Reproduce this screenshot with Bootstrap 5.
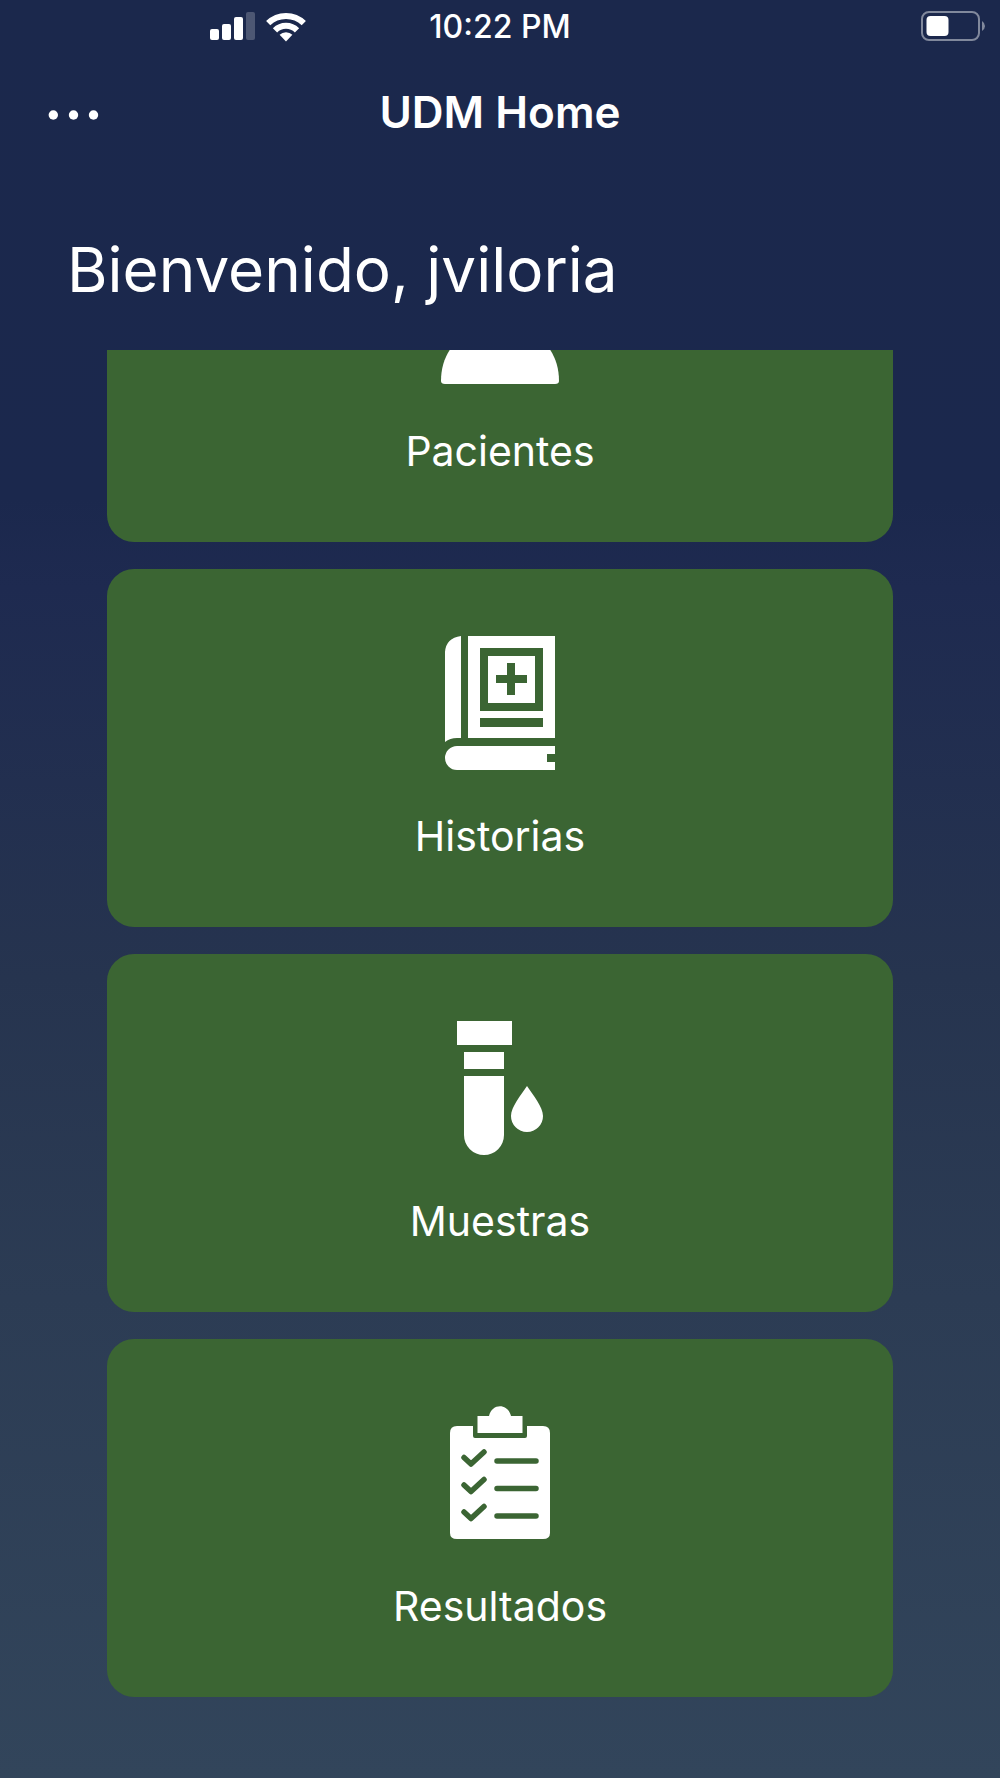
<!DOCTYPE html>
<html lang="es">
<head>
<meta charset="utf-8">
<meta name="viewport" content="width=device-width, initial-scale=1">
<title>UDM Home</title>
<link href="https://cdn.jsdelivr.net/npm/bootstrap@5.3.0/dist/css/bootstrap.min.css" rel="stylesheet">
<style>
  body {
    font-family: Inter, "Liberation Sans", sans-serif;
    color: #fff;
    background: linear-gradient(#1b284c 0%, #1b284d 28%, #1e2a50 33%, #26344f 55%, #2c3c54 73%, #32455b 100%) no-repeat;
  }
  .screen { height: 100vh; }
  .status-bar { height: 54px; padding: 0 15px; }
  .status-side { flex: 1 1 0; gap: 10px; }
  .signal { margin-left: 195px; }
  .clock { font-size: 32px; line-height: 36px; font-weight: 500; }
  .title-bar { height: 118px; padding: 0 48px 2px; }
  .title-side { flex: 1 1 0; }
  .page-title { font-size: 44px; line-height: 52px; font-weight: 600; }
  .welcome { font-size: 62px; line-height: 80px; font-weight: 400; padding: 58px 67px 40px; }
  .tile-view { margin: 0 107px; }
  .tile-list { gap: 27px; margin-top: -166px; }
  .tile {
    background: #3b6533; color: #fff; text-decoration: none;
    border-radius: 27px; padding: 67px 24px 64px; gap: 39px;
  }
  .tile:hover { color: #fff; }
  .tile-label { font-size: 41px; line-height: 54px; }
</style>
<script src="https://cdn.jsdelivr.net/npm/bootstrap@5.3.0/dist/js/bootstrap.bundle.min.js" defer></script>
</head>
<body>
<div class="screen d-flex flex-column overflow-hidden">
  <div class="status-bar d-flex align-items-center flex-shrink-0">
    <div class="status-side d-flex align-items-center">
      <svg class="signal" width="46" height="30" viewBox="0 0 46 30" fill="#fff" aria-label="Señal">
        <rect x="0" y="17" width="9" height="11" rx="2"/><rect x="12" y="12" width="9" height="16" rx="2"/>
        <rect x="24" y="5" width="9" height="23" rx="2"/><rect x="36" y="0" width="9" height="28" rx="2" opacity=".22"/>
      </svg>
      <svg width="40" height="30" viewBox="0 0 40 30" fill="none" stroke="#fff" stroke-width="6" aria-label="Wi-Fi">
        <path d="M2.200 11.200A25.500 25.500 0 0 1 37.800 11.200"/>
        <path d="M9 18.300A15.400 15.400 0 0 1 31 18.300"/>
        <path d="M20 29.500L13.600 22.800A9 9 0 0 1 26.400 22.800Z" fill="#fff" stroke="none"/>
      </svg>
    </div>
    <div class="clock">10:22 PM</div>
    <div class="status-side d-flex justify-content-end">
      <svg width="64" height="32" viewBox="0 0 64 32" aria-label="Batería">
        <rect x="1" y="1" width="57" height="28" rx="7" fill="none" stroke="#fff" stroke-opacity=".45" stroke-width="2"/>
        <rect x="5.500" y="5" width="22" height="20" rx="4" fill="#fff"/>
        <path d="M61 10q3 2 3 5t-3 5z" fill="#fff" opacity=".45"/>
      </svg>
    </div>
  </div>
  <header class="title-bar d-flex align-items-center flex-shrink-0">
    <div class="title-side d-flex">
      <button type="button" class="btn p-0 border-0 d-flex" aria-label="Menú">
        <svg width="52" height="16" viewBox="0 0 52 16" fill="#fff"><circle cx="5.300" cy="11" r="4.700"/><circle cx="25.500" cy="11" r="4.700"/><circle cx="45.500" cy="11" r="4.700"/></svg>
      </button>
    </div>
    <h1 class="page-title m-0">UDM Home</h1>
    <div class="title-side"></div>
  </header>
  <h2 class="welcome m-0 flex-shrink-0">Bienvenido, jviloria</h2>
  <main class="tile-view overflow-hidden flex-shrink-0">
    <nav class="tile-list d-flex flex-column" aria-label="Módulos">
      <a class="tile d-flex flex-column align-items-center" href="#pacientes">
        <svg width="134" height="134" viewBox="0 0 134 134" fill="#fff"><circle cx="67" cy="34" r="34"/><path d="M67 74C98 74 126 94 126 130Q126 133 122 133H12Q8 133 8 130C8 94 36 74 67 74Z"/></svg>
        <span class="tile-label">Pacientes</span>
      </a>
      <a class="tile d-flex flex-column align-items-center" href="#historias">
        <svg width="134" height="134" viewBox="0 0 134 134" fill="#fff" fill-rule="evenodd">
          <path d="M28 0V102H24Q17 102 12 106V16Q13 2 28 0Z"/>
          <path d="M35 0H122V102H35ZM47 12V75H110V12ZM47 82V91H110V82Z"/>
          <path d="M55 20H102V67H55ZM74 27V39H63V47H74V59H82V47H94V39H82V27Z"/>
          <path d="M24 110H122V118H114V126H122V134H24A12 12 0 0 1 24 110Z"/>
        </svg>
        <span class="tile-label">Historias</span>
      </a>
      <a class="tile d-flex flex-column align-items-center" href="#muestras">
        <svg width="134" height="134" viewBox="0 0 134 134" fill="#fff">
          <path d="M24 0H79V24H24ZM31 31H71V48H31ZM31 55H71V114A20 20 0 0 1 31 114Z"/>
          <path d="M94 65C100 74 110 86 110 95A16 16 0 0 1 78 95C78 86 88 74 94 65Z"/>
        </svg>
        <span class="tile-label">Muestras</span>
      </a>
      <a class="tile d-flex flex-column align-items-center" href="#resultados">
        <svg width="134" height="134" viewBox="0 0 134 134" fill="#fff">
          <path d="M44.500 10H56C59 -3 75 -3 78 10H89.500V27H44.500Z"/>
          <path d="M24 20H40V30Q40 32 42 32H92Q94 32 94 30V20H110Q117 20 117 27V127Q117 133 110 133H24Q17 133 17 127V27Q17 20 24 20Z"/>
          <g fill="none" stroke="#3b6533" stroke-width="5.500" stroke-linecap="round" stroke-linejoin="round">
            <path d="M31 51.500L38 58L51 46M31 79L38 85.500L51 73.500M31 106L38 112.500L51 100.500M64 55H103M64 82.500H103M64 110H103"/>
          </g>
        </svg>
        <span class="tile-label">Resultados</span>
      </a>
    </nav>
  </main>
</div>
</body>
</html>
